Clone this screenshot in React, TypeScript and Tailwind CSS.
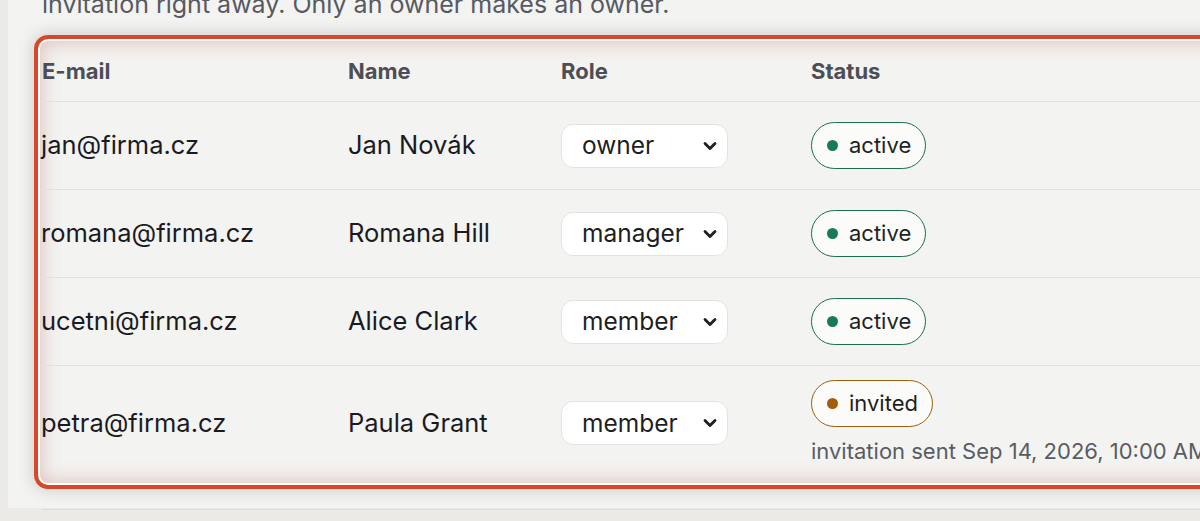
import { ChevronDown } from 'lucide-react'

type Member = {
  email: string
  name: string
  role: string
  status: 'active' | 'invited'
  sentAt?: string
}

const members: Member[] = [
  { email: 'jan@firma.cz', name: 'Jan Novák', role: 'owner', status: 'active' },
  { email: 'romana@firma.cz', name: 'Romana Hill', role: 'manager', status: 'active' },
  { email: 'ucetni@firma.cz', name: 'Alice Clark', role: 'member', status: 'active' },
  {
    email: 'petra@firma.cz',
    name: 'Paula Grant',
    role: 'member',
    status: 'invited',
    sentAt: 'Sep 14, 2026, 10:00 AM',
  },
]

function RoleSelect({ value }: { value: string }) {
  return (
    <div className="flex h-[44px] w-[167px] items-center justify-between rounded-[12px] border border-[#e4e3e0] bg-white pl-[20px] pr-[7px] text-[24.5px] text-[#1e1f23]">
      <span>{value}</span>
      <ChevronDown size={20} strokeWidth={3.4} className="text-[#1e1f23]" />
    </div>
  )
}

function StatusBadge({ status }: { status: Member['status'] }) {
  const invited = status === 'invited'
  return (
    <span
      className={
        invited
          ? 'inline-flex h-[47px] items-center gap-[11px] rounded-full border-[1.5px] border-[#9c600c] bg-[#fbfbf9] pl-[15px] pr-[14px] text-[22px] text-[#1e1f23]'
          : 'inline-flex h-[47px] items-center gap-[11px] rounded-full border-[1.5px] border-[#1a6f4d] bg-[#fbfbf9] pl-[15px] pr-[14px] text-[22px] text-[#1e1f23]'
      }
    >
      <span
        className={
          invited
            ? 'h-[11px] w-[11px] rounded-full bg-[#a35d0c]'
            : 'h-[11px] w-[11px] rounded-full bg-[#1b7a56]'
        }
      />
      {status}
    </span>
  )
}

export default function App() {
  return (
    <div className="h-[521px] w-[1200px] overflow-hidden bg-[#ebeae7] font-['Inter','Noto_Sans',sans-serif]">
      <div className="ml-2 h-full bg-[#f3f3f1] pl-[26px]">
        {/* helper copy above the members table */}
        <p className="-mt-[13px] ml-[8px] whitespace-nowrap text-[25px] leading-[34px] text-[#575a61]">
          invitation right away. Only an owner makes an owner.
        </p>

        {/* highlighted members table */}
        <div className="mt-[14px] w-[1260px] rounded-[14px] border-4 border-[#d9472b] shadow-[inset_0_0_0_2px_#ffffff,inset_0_0_18px_4px_rgba(190,110,100,0.35),0_0_16px_2px_rgba(0,0,0,0.14)]">
          <div className="px-[2px] pt-[2px] pb-[3px]">
            <div className="grid grid-cols-[308px_213px_250px_1fr]">
              <div className="flex h-[61px] items-center border-b border-[#e1e0dd] pl-[2px] text-[22px] font-bold text-[#4d4e55]">E-mail</div>
              <div className="flex h-[61px] items-center border-b border-[#e1e0dd] text-[22px] font-bold text-[#4d4e55]">Name</div>
              <div className="flex h-[61px] items-center border-b border-[#e1e0dd] text-[22px] font-bold text-[#4d4e55]">Role</div>
              <div className="flex h-[61px] items-center border-b border-[#e1e0dd] text-[22px] font-bold text-[#4d4e55]">Status</div>

              {members.map((m, i) => {
                const last = i === members.length - 1
                const cell = last
                  ? 'flex items-center pt-[14px] pb-[16px] text-[25.5px] text-[#1a1b1f]'
                  : 'flex min-h-[88px] items-center border-b border-[#e1e0dd] text-[25.5px] text-[#1a1b1f]'
                return (
                  <div key={m.email} className="contents">
                    <div className={cell}>
                      <span className="pl-[1px]">{m.email}</span>
                    </div>
                    <div className={cell}>{m.name}</div>
                    <div className={cell}>
                      <RoleSelect value={m.role} />
                    </div>
                    <div className={cell}>
                      <div className="flex flex-col items-start">
                        <StatusBadge status={m.status} />
                        {m.sentAt && (
                          <span className="mt-[9px] whitespace-nowrap text-[22px] leading-[30px] text-[#5a5c63]">
                            invitation sent {m.sentAt}
                          </span>
                        )}
                      </div>
                    </div>
                  </div>
                )
              })}
            </div>
          </div>
        </div>

        <div className="mt-[20px] ml-[8px] border-t border-[#dddcd9]" />
      </div>
    </div>
  )
}
